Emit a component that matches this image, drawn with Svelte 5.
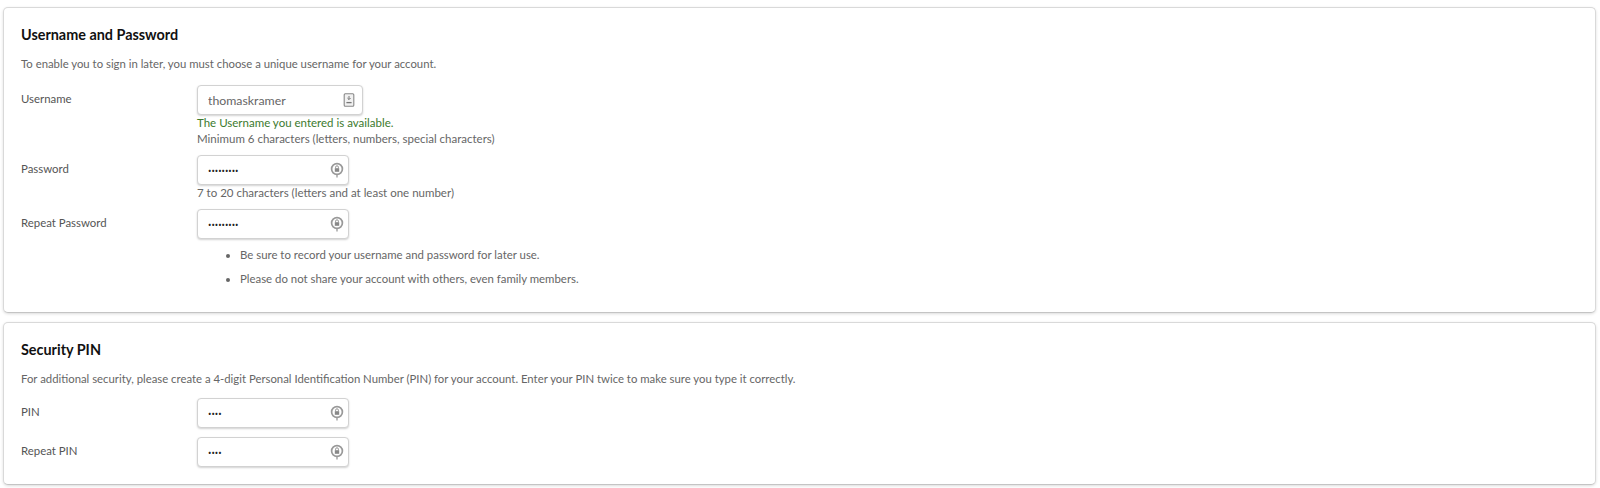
{#snippet reveal()}
  <svg class="ico" width="14" height="18" viewBox="0 0 14 18" aria-hidden="true">
    <circle cx="7" cy="8" r="5.4" fill="none" stroke="#999" stroke-width="1.7"/>
    <rect x="4.8" y="7.2" width="4.4" height="3.6" fill="#888"/>
    <path d="M5.6 7.2V6.2a1.4 1.4 0 0 1 2.8 0v1" fill="none" stroke="#888" stroke-width="0.9"/>
    <path d="M7 13v3.4" fill="none" stroke="#999" stroke-width="1.3"/>
  </svg>
{/snippet}

<main class="page">
  <section class="card first">
    <h2>Username and Password</h2>
    <p class="desc">To enable you to sign in later, you must choose a unique username for your account.</p>

    <div class="row user">
      <label for="u">Username</label>
      <div class="field">
        <div class="box wide">
          <input id="u" class="text" value="thomaskramer" />
          <svg class="ico" width="12" height="14" viewBox="0 0 12 14" aria-hidden="true">
            <rect x="1.2" y="0.8" width="9.6" height="12.4" rx="1" fill="#f1f1f1" stroke="#888" stroke-width="1.1"/>
            <path d="M6 3v3.4M4.4 5l1.6 1.6L7.6 5" fill="none" stroke="#777" stroke-width="1"/>
            <path d="M3.4 9.6h5.2" stroke="#777" stroke-width="1.3"/>
          </svg>
        </div>
        <div class="hint ok">The Username you entered is available.</div>
        <div class="hint">Minimum 6 characters (letters, numbers, special characters)</div>
      </div>
    </div>

    <div class="row pw">
      <label for="p">Password</label>
      <div class="field">
        <div class="box">
          <input id="p" class="dots" type="password" value="password1" />
          {@render reveal()}
        </div>
        <div class="hint">7 to 20 characters (letters and at least one number)</div>
      </div>
    </div>

    <div class="row rp">
      <label for="r">Repeat Password</label>
      <div class="field">
        <div class="box">
          <input id="r" class="dots" type="password" value="password1" />
          {@render reveal()}
        </div>
      </div>
    </div>

    <ul>
      <li>Be sure to record your username and password for later use.</li>
      <li>Please do not share your account with others, even family members.</li>
    </ul>
  </section>

  <section class="card second">
    <h2>Security PIN</h2>
    <p class="desc">For additional security, please create a 4-digit Personal Identification Number (PIN) for your account. Enter your PIN twice to make sure you type it correctly.</p>

    <div class="row pin">
      <label for="a">PIN</label>
      <div class="field">
        <div class="box">
          <input id="a" class="dots" type="password" value="1234" />
          {@render reveal()}
        </div>
      </div>
    </div>
    <div class="row pin">
      <label for="b">Repeat PIN</label>
      <div class="field">
        <div class="box">
          <input id="b" class="dots" type="password" value="1234" />
          {@render reveal()}
        </div>
      </div>
    </div>
  </section>
</main>

<style>
  :global(body) {
    margin: 0;
    background: #fff;
    font-family: "Lato", "Noto Sans", sans-serif;
    color: #555;
  }
  .page {
    height: 488px;
    box-sizing: border-box;
    padding: 7px 4px 0 3px;
    display: flex;
    flex-direction: column;
    gap: 9px;
    overflow: hidden;
  }
  .card {
    box-sizing: border-box;
    border: 1px solid #d9d9d9;
    border-bottom-color: #c4c4c4;
    border-radius: 5px;
    box-shadow: 0 1px 3px rgba(0, 0, 0, 0.14);
    padding: 0 17px;
    background: #fff;
  }
  .first { height: 306px; padding-top: 17px; }
  .second { height: 163px; padding-top: 17px; }
  h2 {
    margin: 0;
    font-size: 14.4px;
    line-height: 20px;
    font-weight: 700;
    color: #111;
  }
  .desc {
    margin: 11px 0 0;
    font-size: 11.35px;
    line-height: 16px;
    color: #666;
  }
  .row { display: flex; align-items: flex-start; }
  label {
    width: 176px;
    flex: none;
    font-size: 11.4px;
    line-height: 16px;
    color: #555;
    padding-top: 6px;
  }
  .user { margin-top: 13px; }
  .pw { margin-top: 9px; }
  .rp { margin-top: 9px; }
  .pin { margin-top: 9px; }
  .desc + .pin { margin-top: 11px; }
  .box {
    box-sizing: border-box;
    width: 152px;
    height: 30px;
    display: flex;
    align-items: center;
    justify-content: space-between;
    padding: 0 4px 0 10px;
    border: 1px solid #d2d2d2;
    border-radius: 4px;
    box-shadow: 0 1px 2px rgba(0, 0, 0, 0.18);
    background: #fff;
  }
  .wide { width: 166px; padding-right: 7px; }
  input {
    border: 0;
    outline: 0;
    padding: 0;
    margin: 0;
    min-width: 0;
    flex: 1;
    background: transparent;
    font-family: inherit;
  }
  .text { font-size: 12.3px; color: #666; }
  .dots { font-size: 9px; color: #222; font-family: "Noto Sans", sans-serif; }
  .hint {
    font-size: 11.5px;
    line-height: 15.5px;
    color: #666;
  }
  .pw .hint { line-height: 15px; }
  .ok { color: #3c7a2e; }
  .ico { flex: none; display: block; }
  ul {
    margin: 8px 0 0;
    padding: 0 0 0 219px;
    font-size: 11.4px;
    color: #666;
  }
  li { line-height: 16px; margin-bottom: 8px; }
</style>
